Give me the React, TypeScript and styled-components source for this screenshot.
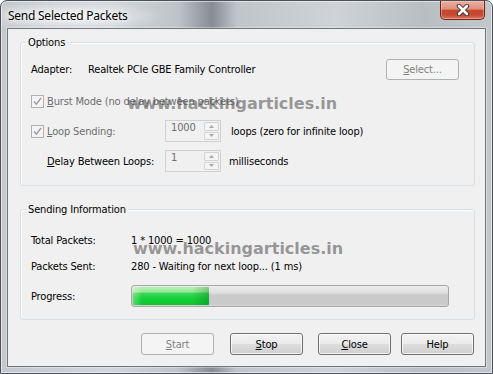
import React from "react";
import styled, { createGlobalStyle } from "styled-components";

const Global = createGlobalStyle`
  html, body { margin: 0; padding: 0; background: #ffffff; }
  body { width: 493px; height: 374px; overflow: hidden; }
`;

const UI = `"DejaVu Sans Condensed", "DejaVu Sans", sans-serif`;

const Window = styled.div`
  position: relative;
  box-sizing: border-box;
  width: 493px;
  height: 374px;
  border: 1px solid #4b5157;
  border-radius: 7px 7px 0 0;
  background: linear-gradient(
    to right,
    #c3c8cd 0%,
    #d2d6da 22%,
    #bfc4c9 36%,
    #868c92 43%,
    #c0c5ca 48%,
    #cfd3d7 68%,
    #b9bec3 86%,
    #c2c7cc 100%
  );
  box-shadow: inset 0 0 0 1px rgba(255, 255, 255, 0.55);
  display: flex;
  flex-direction: column;
  overflow: hidden;
  font-family: ${UI};
  font-stretch: condensed;
`;

const TitleBar = styled.div`
  height: 27px;
  display: flex;
  align-items: flex-start;
  justify-content: space-between;
  padding-left: 7px;
  padding-right: 7px;
  background: radial-gradient(
    ellipse 95px 16px at 68px 15px,
    rgba(255, 255, 255, 0.75),
    rgba(255, 255, 255, 0)
  );
`;

const TitleText = styled.div`
  margin-top: 7px;
  font-family: "Noto Sans", "Open Sans", sans-serif;
  font-stretch: normal;
  font-size: 12px;
  letter-spacing: -0.25px;
  line-height: 15px;
  color: #000;
  text-shadow: 0 0 8px #fff, 0 0 4px #fff;
`;

const CloseButton = styled.div`
  box-sizing: border-box;
  width: 45px;
  height: 19px;
  border: 1px solid #6a2418;
  border-top: none;
  border-radius: 0 0 5px 5px;
  background: linear-gradient(
    to bottom,
    #eab0a2 0%,
    #dd8e7c 45%,
    #c6452d 52%,
    #c44a31 78%,
    #d8795c 100%
  );
  box-shadow: inset 0 0 0 1px rgba(255, 210, 200, 0.45);
  display: flex;
  align-items: center;
  justify-content: center;
`;

const Client = styled.div`
  box-sizing: border-box;
  margin: 0 6px 6px 6px;
  height: 339px;
  border: 1px solid #6f757b;
  box-shadow: 0 0 0 1px rgba(255, 255, 255, 0.35);
  background: #f0f0f0;
  padding: 13px 10px 11px 12px;
  display: flex;
  flex-direction: column;
  font-size: 11px;
  letter-spacing: -0.15px;
  color: #000;
`;

const GroupBox = styled.div<{ $h: number; $top?: number }>`
  position: relative;
  box-sizing: border-box;
  height: ${(p) => p.$h}px;
  margin-top: ${(p) => p.$top ?? 0}px;
  border: 1px solid #d5dfe5;
  border-radius: 3px;
  box-shadow: inset 1px 1px 0 #ffffff;
`;

const GroupTitle = styled.span`
  position: absolute;
  top: -7px;
  left: 5px;
  padding: 0 2px;
  background: #f0f0f0;
  line-height: 13px;
  color: #000;
`;

const GroupBody = styled.div<{ $pt: number; $pr: number }>`
  display: flex;
  flex-direction: column;
  padding: ${(p) => p.$pt}px ${(p) => p.$pr}px 0 10px;
`;

const Row = styled.div<{ $h: number; $top?: number; $indent?: number }>`
  display: flex;
  align-items: center;
  height: ${(p) => p.$h}px;
  margin-top: ${(p) => p.$top ?? 0}px;
  padding-left: ${(p) => p.$indent ?? 0}px;
  line-height: 13px;
  white-space: nowrap;
`;

const Label = styled.span<{ $w?: number; $disabled?: boolean }>`
  flex: none;
  width: ${(p) => (p.$w ? `${p.$w}px` : "auto")};
  color: ${(p) => (p.$disabled ? "#6d6d6d" : "#000")};
`;

const Text = styled.span<{ $ml?: number }>`
  margin-left: ${(p) => p.$ml ?? 0}px;
  color: #000;
`;

const Key = styled.u`
  text-decoration: underline;
  text-underline-offset: 1px;
`;

const Spacer = styled.div`
  flex: 1;
`;

const PushButton = styled.div<{ $disabled?: boolean; $h?: number; $ml?: number }>`
  box-sizing: border-box;
  flex: none;
  width: 73px;
  height: ${(p) => p.$h ?? 22}px;
  margin-left: ${(p) => p.$ml ?? 0}px;
  border: 1px solid ${(p) => (p.$disabled ? "#adb2b5" : "#707070")};
  border-radius: 3px;
  background: ${(p) =>
    p.$disabled
      ? "#f4f4f4"
      : "linear-gradient(to bottom, #f2f2f2 0%, #ebebeb 48%, #dddddd 52%, #cfcfcf 100%)"};
  box-shadow: ${(p) => (p.$disabled ? "none" : "inset 0 0 0 1px rgba(255,255,255,0.75)")};
  color: ${(p) => (p.$disabled ? "#838383" : "#000")};
  display: flex;
  align-items: center;
  justify-content: center;
  font-size: 11px;
  line-height: 13px;
`;

const CheckWrap = styled.div<{ $w?: number }>`
  flex: none;
  display: flex;
  align-items: center;
  width: ${(p) => (p.$w ? `${p.$w}px` : "auto")};
`;

const CheckBox = styled.div`
  box-sizing: border-box;
  width: 13px;
  height: 13px;
  margin-right: 3px;
  border: 1px solid #b1b1b1;
  background: #f4f4f4;
  display: flex;
  align-items: center;
  justify-content: center;
`;

const Spin = styled.div`
  box-sizing: border-box;
  flex: none;
  width: 56px;
  height: 22px;
  border: 1px solid #cfd2d5;
  background: #f0f0f0;
  display: flex;
`;

const SpinField = styled.div`
  flex: 1;
  padding-left: 5px;
  line-height: 13px;
  color: #6d6d6d;
`;

const SpinArrows = styled.div`
  flex: none;
  width: 15px;
  padding: 1px 1px 1px 0;
  display: flex;
  flex-direction: column;
  gap: 1px;
`;

const SpinArrow = styled.div`
  box-sizing: border-box;
  flex: 1;
  border: 1px solid #d4d4d4;
  border-radius: 1px;
  background: #f4f4f4;
  display: flex;
  align-items: center;
  justify-content: center;
`;

const Progress = styled.div`
  box-sizing: border-box;
  flex: none;
  width: 318px;
  height: 22px;
  border: 1px solid #a8a8a8;
  border-radius: 3px;
  padding: 1px;
  background: linear-gradient(
    to bottom,
    #ececec 0%,
    #dedede 35%,
    #cbcbcb 45%,
    #c9c9c9 85%,
    #d4d4d4 100%
  );
  display: flex;
`;

const ProgressFill = styled.div`
  height: 100%;
  border-radius: 1px;
  background: linear-gradient(
      to right,
      rgba(255, 255, 255, 0.3) 0%,
      rgba(255, 255, 255, 0) 12%,
      rgba(255, 255, 255, 0) 78%,
      rgba(0, 90, 20, 0.28) 100%
    ),
    linear-gradient(
      to bottom,
      #b4f0b4 0%,
      #98e898 28%,
      #3fd758 34%,
      #19d13a 60%,
      #0cc52d 100%
    );
`;

const ButtonRow = styled.div`
  display: flex;
  justify-content: flex-end;
  margin-top: 13px;
  padding-right: 1px;
`;

const Watermark = styled.span<{ $x: number; $y: number }>`
  position: absolute;
  left: ${(p) => p.$x}px;
  top: ${(p) => p.$y}px;
  font-family: "DejaVu Sans", sans-serif;
  font-stretch: normal;
  font-weight: bold;
  font-size: 16px;
  line-height: 19px;
  color: rgba(80, 80, 80, 0.58);
  white-space: nowrap;
  pointer-events: none;
`;

const CloseGlyph = () => (
  <svg width="14" height="12" viewBox="0 0 14 12">
    <path d="M3 2 L11 10 M11 2 L3 10" stroke="#3b2a27" strokeWidth="4.4" strokeLinecap="round" />
    <path d="M3 2 L11 10 M11 2 L3 10" stroke="#ffffff" strokeWidth="2.6" strokeLinecap="round" />
  </svg>
);

const Check = () => (
  <svg width="9" height="9" viewBox="0 0 9 9">
    <path d="M1 4.5 L3.4 7.2 L8 1" fill="none" stroke="#9c9c9c" strokeWidth="1.4" />
  </svg>
);

const Up = () => (
  <svg width="5" height="3" viewBox="0 0 5 3">
    <path d="M0 3 L2.5 0 L5 3 Z" fill="#a8a8a8" />
  </svg>
);

const Down = () => (
  <svg width="5" height="3" viewBox="0 0 5 3">
    <path d="M0 0 L2.5 3 L5 0 Z" fill="#a8a8a8" />
  </svg>
);

const SpinBox = ({ value }: { value: string }) => (
  <Spin>
    <SpinField>{value}</SpinField>
    <SpinArrows>
      <SpinArrow>
        <Up />
      </SpinArrow>
      <SpinArrow>
        <Down />
      </SpinArrow>
    </SpinArrows>
  </Spin>
);

export default function App() {
  const sent = 280;
  const total = 1000;
  const progressPct = (sent / total) * 86;

  return (
    <>
      <Global />
      <Window>
        <TitleBar>
          <TitleText>Send Selected Packets</TitleText>
          <CloseButton>
            <CloseGlyph />
          </CloseButton>
        </TitleBar>
        <Client>
          <GroupBox $h={144}>
            <GroupTitle>Options</GroupTitle>
            <GroupBody $pt={16} $pr={15}>
              <Row $h={21}>
                <Label $w={57}>Adapter:</Label>
                <Text>Realtek PCIe GBE Family Controller</Text>
                <Spacer />
                <PushButton $disabled $h={21}>
                  <span>
                    <Key>S</Key>elect...
                  </span>
                </PushButton>
              </Row>
              <Row $h={22} $top={10}>
                <CheckWrap>
                  <CheckBox>
                    <Check />
                  </CheckBox>
                  <Label $disabled>
                    <Key>B</Key>urst Mode (no delay between packets)
                  </Label>
                </CheckWrap>
              </Row>
              <Row $h={22} $top={8}>
                <CheckWrap $w={134}>
                  <CheckBox>
                    <Check />
                  </CheckBox>
                  <Label $disabled>
                    <Key>L</Key>oop Sending:
                  </Label>
                </CheckWrap>
                <SpinBox value="1000" />
                <Text $ml={10}>loops (zero for infinite loop)</Text>
              </Row>
              <Row $h={22} $top={8} $indent={16}>
                <Label $w={118}>
                  <Key>D</Key>elay Between Loops:
                </Label>
                <SpinBox value="1" />
                <Text $ml={8}>milliseconds</Text>
              </Row>
            </GroupBody>
          </GroupBox>

          <GroupBox $h={111} $top={23}>
            <GroupTitle>Sending Information</GroupTitle>
            <GroupBody $pt={20} $pr={15}>
              <Row $h={20}>
                <Label $w={100}>Total Packets:</Label>
                <Text>1 * 1000 = 1000</Text>
              </Row>
              <Row $h={20} $top={6}>
                <Label $w={100}>Packets Sent:</Label>
                <Text>280 - Waiting for next loop... (1 ms)</Text>
              </Row>
              <Row $h={22} $top={9}>
                <Label $w={100}>Progress:</Label>
                <Progress>
                  <ProgressFill style={{ width: `${progressPct}%` }} />
                </Progress>
              </Row>
            </GroupBody>
          </GroupBox>

          <ButtonRow>
            <PushButton $disabled>
              <span>
                <Key>S</Key>tart
              </span>
            </PushButton>
            <PushButton $ml={16}>
              <span>
                <Key>S</Key>top
              </span>
            </PushButton>
            <PushButton $ml={15}>
              <span>
                <Key>C</Key>lose
              </span>
            </PushButton>
            <PushButton $ml={10}>Help</PushButton>
          </ButtonRow>
        </Client>
        <Watermark $x={126} $y={93}>www.hackingarticles.in</Watermark>
        <Watermark $x={132} $y={238}>www.hackingarticles.in</Watermark>
      </Window>
    </>
  );
}
